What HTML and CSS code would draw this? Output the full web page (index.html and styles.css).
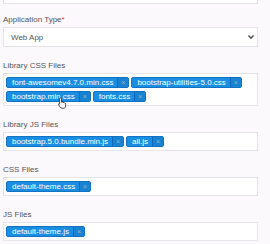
FILE: index.html
```html
<!DOCTYPE html>
<html lang="en">
<head>
<meta charset="UTF-8">
<title>App Settings</title>
<link rel="stylesheet" href="styles.css">
</head>
<body>
  <div class="form">
    <div class="group top">
      <div class="input"></div>
    </div>

    <div class="group">
      <label>Application Type<span class="req">*</span></label>
      <div class="select">
        <span>Web App</span>
        <svg class="chev" width="6" height="4" viewBox="0 0 6 4"><path d="M0.5 0.5 L3 3.2 L5.5 0.5" fill="none" stroke="#444" stroke-width="1.3"/></svg>
      </div>
    </div>

    <div class="group">
      <label>Library CSS Files</label>
      <div class="multi">
        <span class="tag">font-awesomev4.7.0.min.css<i>&times;</i></span>
        <span class="tag">bootstrap-utilities-5.0.css<i>&times;</i></span>
        <span class="tag hovered">bootstrap.min.css<i>&times;</i>
          <svg class="cursor" width="9" height="12" viewBox="0 0 9 12"><path d="M2.5 0.8 C3.3 0.8 3.5 1.3 3.5 2 L3.5 5.2 L4.2 5 C4.8 4.9 5.1 5.2 5.2 5.5 C5.8 5.3 6.3 5.5 6.4 5.9 C7 5.8 7.6 6.1 7.6 6.8 L7.6 9 C7.6 10.3 6.8 11.2 5.5 11.2 L4 11.2 C3 11.2 2.4 10.7 1.9 9.9 L0.6 7.6 C0.3 7.1 0.6 6.6 1.1 6.7 C1.4 6.8 1.5 7 1.6 7.2 L1.6 2 C1.6 1.3 1.8 0.8 2.5 0.8 Z" fill="#fff" stroke="#222" stroke-width="0.8"/></svg>
        </span>
        <span class="tag">fonts.css<i>&times;</i></span>
      </div>
    </div>

    <div class="group">
      <label>Library JS Files</label>
      <div class="multi">
        <span class="tag">bootstrap.5.0.bundle.min.js<i>&times;</i></span>
        <span class="tag">all.js<i>&times;</i></span>
      </div>
    </div>

    <div class="group">
      <label>CSS Files</label>
      <div class="multi">
        <span class="tag">default-theme.css<i>&times;</i></span>
      </div>
    </div>

    <div class="group">
      <label>JS Files</label>
      <div class="multi">
        <span class="tag">default-theme.js<i>&times;</i></span>
      </div>
    </div>
  </div>
</body>
</html>
```

FILE: styles.css
```css
body {
  margin: 0;
  background: #fbf9fc;
  font-family: "Liberation Sans", Arial, sans-serif;
  color: #555;
}

.form {
  width: 255px;
  margin-left: 3px;
}

.group {
  margin-bottom: 13px;
}

.group.top {
  margin-top: -16px;
  margin-bottom: 10px;
}

label {
  display: block;
  font-size: 8px;
  line-height: 12px;
  margin-bottom: 1px;
  color: #555;
}

.req {
  color: #e03a3a;
}

.input {
  height: 18px;
  background: #fff;
  border: 1px solid #e6e4e8;
}

.select {
  height: 18px;
  background: #fff;
  border: 1px solid #e6e4e8;
  display: flex;
  align-items: center;
  justify-content: space-between;
  padding: 0 3px 0 7px;
  font-size: 8px;
  color: #555;
}

.chev {
  display: block;
}

.multi {
  background: #fff;
  border: 1px solid #e6e4e8;
  padding: 3px 2px;
  display: flex;
  flex-wrap: wrap;
  gap: 3px 2px;
}

.tag {
  display: flex;
  align-items: stretch;
  height: 9px;
  line-height: 9px;
  font-size: 8px;
  color: #fff;
  background: #1a8ee2;
  border: 1px solid #1472c4;
  border-radius: 2px;
  padding-left: 5px;
}

.tag.hovered {
  position: relative;
}

.tag i {
  font-style: normal;
  font-size: 7px;
  width: 10px;
  margin-left: 4px;
  text-align: center;
  color: #9fb3c6;
  background: #1783d2;
  border-left: 1px solid #1268b6;
}

.cursor {
  position: absolute;
  left: 51px;
  top: 5px;
}
```
